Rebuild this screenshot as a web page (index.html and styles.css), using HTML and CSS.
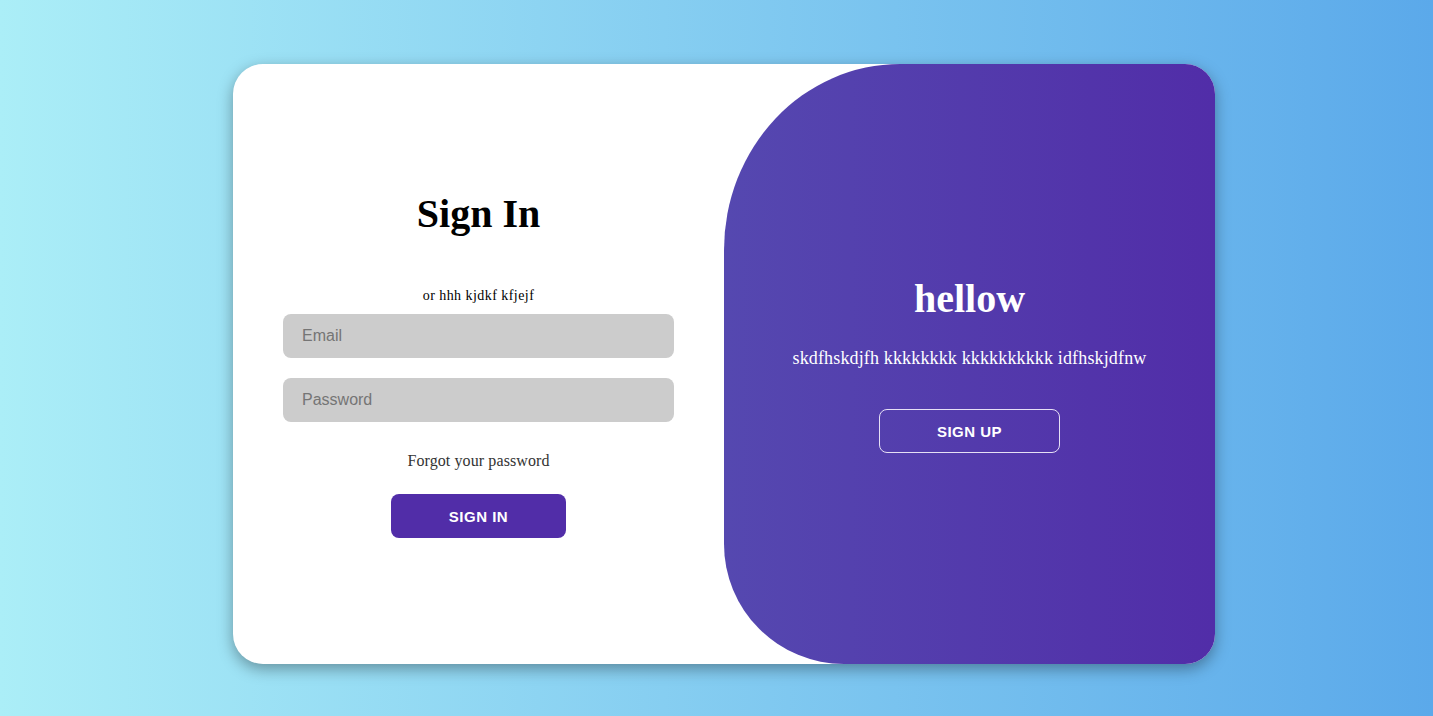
FILE: index.html
```html
<!DOCTYPE html>
<html lang="en">
<head>
<meta charset="utf-8">
<title>Sign In</title>
<link rel="stylesheet" href="styles.css">
</head>
<body>
  <div class="card">
    <form class="signin">
      <h1 class="title">Sign In</h1>
      <span class="hint">or hhh kjdkf kfjejf</span>
      <input class="field" type="email" placeholder="Email">
      <input class="field field-last" type="password" placeholder="Password">
      <a class="forgot" href="#">Forgot your password</a>
      <button class="btn btn-solid" type="button">Sign In</button>
    </form>
    <div class="panel">
      <h1 class="title title-light">hellow</h1>
      <p class="panel-text">skdfhskdjfh kkkkkkkk kkkkkkkkkk idfhskjdfnw</p>
      <button class="btn btn-ghost" type="button">Sign Up</button>
    </div>
  </div>
</body>
</html>
```

FILE: styles.css
```css
* { box-sizing: border-box; }

html, body {
  margin: 0;
  height: 100%;
}

body {
  background: linear-gradient(to right, #abeef7, #5ba9ea);
  font-family: "Liberation Serif", "Times New Roman", serif;
  display: flex;
  justify-content: center;
  align-items: center;
  padding: 12px 0 0 15px;
}

.card {
  width: 982px;
  height: 600px;
  flex-shrink: 0;
  background: #fff;
  border-radius: 30px;
  box-shadow: 0 5px 15px rgba(0, 0, 0, 0.35);
  overflow: hidden;
  display: grid;
  grid-template-columns: 491px 491px;
}

.signin {
  display: flex;
  flex-direction: column;
  align-items: center;
  justify-content: center;
  padding: 0 50px;
}

.title {
  margin: 0;
  font-size: 40px;
  line-height: 48px;
  font-weight: bold;
  color: #000;
}

.title-light { color: #fff; }

.hint {
  font-size: 14px;
  line-height: 17px;
  letter-spacing: 0.45px;
  color: #000;
  margin: 49px 0 10px;
}

.field {
  width: 100%;
  height: 44px;
  border: none;
  outline: none;
  border-radius: 8px;
  background: #cccccc;
  padding: 0 19px;
  font-family: "Liberation Sans", Arial, sans-serif;
  font-size: 16px;
  color: #333;
  margin-bottom: 20px;
}

.field::placeholder { color: #757575; }

.field-last { margin-bottom: 30px; }

.forgot {
  font-size: 16px;
  line-height: 17px;
  letter-spacing: 0.1px;
  color: #333;
  text-decoration: none;
  margin-bottom: 25px;
}

.btn {
  height: 44px;
  border-radius: 8px;
  font-family: "Liberation Sans", Arial, sans-serif;
  font-size: 15px;
  font-weight: bold;
  letter-spacing: 0.5px;
  text-transform: uppercase;
  color: #fff;
  cursor: pointer;
}

.btn-solid {
  width: 175px;
  background: #512da8;
  border: 1px solid transparent;
}

.btn-ghost {
  width: 181px;
  background: transparent;
  border: 1px solid #e6e0f5;
}

.panel {
  background: linear-gradient(to right, #5548b0, #512da8);
  border-radius: 176px 0 0 120px / 186px 0 0 120px;
  display: flex;
  flex-direction: column;
  align-items: center;
  justify-content: center;
  color: #fff;
}

.panel-text {
  font-size: 18px;
  line-height: 20px;
  letter-spacing: 0.15px;
  margin: 25px 0 41px;
}
```
